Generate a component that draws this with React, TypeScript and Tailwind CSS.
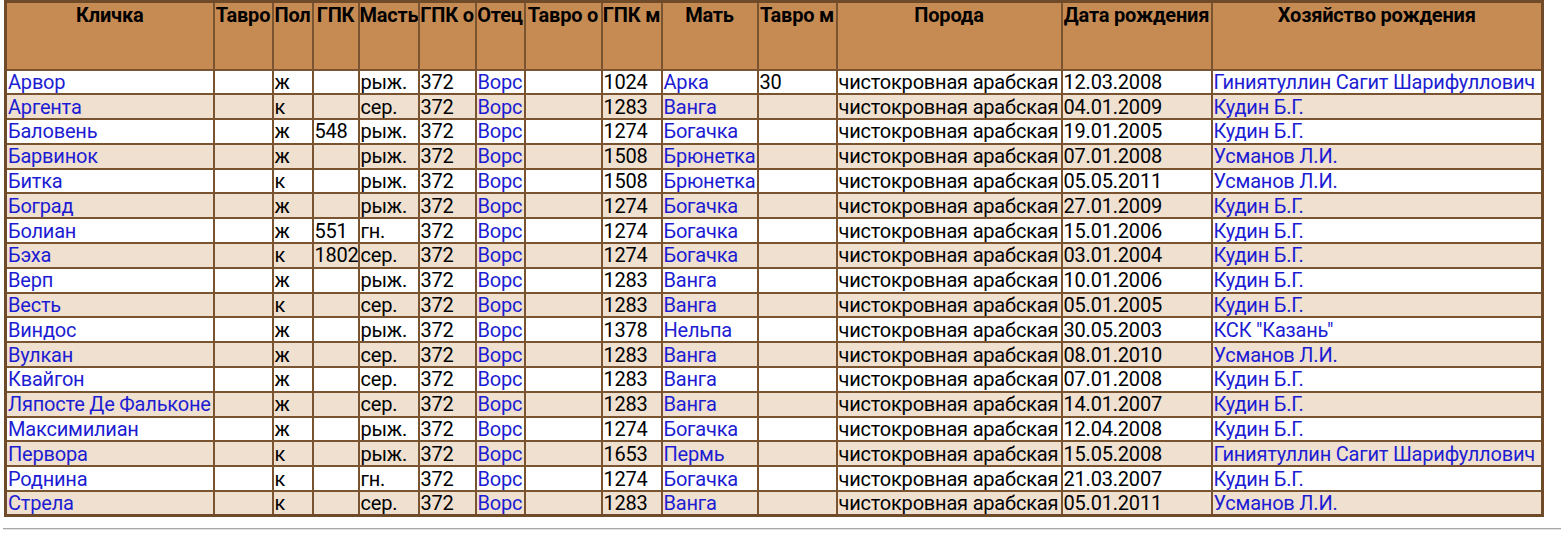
const columns = [
  { title: 'Кличка', w: 'w-[208px]' },
  { title: 'Тавро', w: 'w-[59px]' },
  { title: 'Пол', w: 'w-[40px]' },
  { title: 'ГПК', w: 'w-[46px]' },
  { title: 'Масть', w: 'w-[60px]' },
  { title: 'ГПК о', w: 'w-[57px]' },
  { title: 'Отец', w: 'w-[49px]' },
  { title: 'Тавро о', w: 'w-[77px]' },
  { title: 'ГПК м', w: 'w-[60px]' },
  { title: 'Мать', w: 'w-[96px]' },
  { title: 'Тавро м', w: 'w-[79px]' },
  { title: 'Порода', w: 'w-[225px]' },
  { title: 'Дата рождения', w: 'w-[150px]' },
  { title: 'Хозяйство рождения', w: 'w-[331px]' },
]

// columns rendered as links
const linkCols = [0, 6, 9, 13]

const BREED = 'чистокровная арабская'
const GINI = 'Гиниятуллин Сагит Шарифуллович'

const rows: string[][] = [
  ['Арвор', '', 'ж', '', 'рыж.', '372', 'Ворс', '', '1024', 'Арка', '30', BREED, '12.03.2008', GINI],
  ['Аргента', '', 'к', '', 'сер.', '372', 'Ворс', '', '1283', 'Ванга', '', BREED, '04.01.2009', 'Кудин Б.Г.'],
  ['Баловень', '', 'ж', '548', 'рыж.', '372', 'Ворс', '', '1274', 'Богачка', '', BREED, '19.01.2005', 'Кудин Б.Г.'],
  ['Барвинок', '', 'ж', '', 'рыж.', '372', 'Ворс', '', '1508', 'Брюнетка', '', BREED, '07.01.2008', 'Усманов Л.И.'],
  ['Битка', '', 'к', '', 'рыж.', '372', 'Ворс', '', '1508', 'Брюнетка', '', BREED, '05.05.2011', 'Усманов Л.И.'],
  ['Боград', '', 'ж', '', 'рыж.', '372', 'Ворс', '', '1274', 'Богачка', '', BREED, '27.01.2009', 'Кудин Б.Г.'],
  ['Болиан', '', 'ж', '551', 'гн.', '372', 'Ворс', '', '1274', 'Богачка', '', BREED, '15.01.2006', 'Кудин Б.Г.'],
  ['Бэха', '', 'к', '1802', 'сер.', '372', 'Ворс', '', '1274', 'Богачка', '', BREED, '03.01.2004', 'Кудин Б.Г.'],
  ['Верп', '', 'ж', '', 'рыж.', '372', 'Ворс', '', '1283', 'Ванга', '', BREED, '10.01.2006', 'Кудин Б.Г.'],
  ['Весть', '', 'к', '', 'сер.', '372', 'Ворс', '', '1283', 'Ванга', '', BREED, '05.01.2005', 'Кудин Б.Г.'],
  ['Виндос', '', 'ж', '', 'рыж.', '372', 'Ворс', '', '1378', 'Нельпа', '', BREED, '30.05.2003', 'КСК "Казань"'],
  ['Вулкан', '', 'ж', '', 'сер.', '372', 'Ворс', '', '1283', 'Ванга', '', BREED, '08.01.2010', 'Усманов Л.И.'],
  ['Квайгон', '', 'ж', '', 'сер.', '372', 'Ворс', '', '1283', 'Ванга', '', BREED, '07.01.2008', 'Кудин Б.Г.'],
  ['Ляпосте Де Фальконе', '', 'ж', '', 'сер.', '372', 'Ворс', '', '1283', 'Ванга', '', BREED, '14.01.2007', 'Кудин Б.Г.'],
  ['Максимилиан', '', 'ж', '', 'рыж.', '372', 'Ворс', '', '1274', 'Богачка', '', BREED, '12.04.2008', 'Кудин Б.Г.'],
  ['Первора', '', 'к', '', 'рыж.', '372', 'Ворс', '', '1653', 'Пермь', '', BREED, '15.05.2008', GINI],
  ['Роднина', '', 'к', '', 'гн.', '372', 'Ворс', '', '1274', 'Богачка', '', BREED, '21.03.2007', 'Кудин Б.Г.'],
  ['Стрела', '', 'к', '', 'сер.', '372', 'Ворс', '', '1283', 'Ванга', '', BREED, '05.01.2011', 'Усманов Л.И.'],
]

export default function App() {
  return (
    <div className="bg-white min-h-[534px] font-['Roboto',sans-serif] text-black overflow-hidden">
      <table className="ml-[4px] table-fixed border-collapse border-[3px] border-[#6f4b2a] w-[1540px]">
        <colgroup>
          {columns.map((c) => (
            <col key={c.title} className={c.w} />
          ))}
        </colgroup>
        <thead>
          <tr className="bg-[#c68b53] h-[68px]">
            {columns.map((c) => (
              <th
                key={c.title}
                className="border-2 border-[#7a5431] align-top text-center font-bold text-[20px] leading-[22px] px-0 pt-[1px] whitespace-nowrap overflow-hidden tracking-[-0.2px]"
              >
                {c.title}
              </th>
            ))}
          </tr>
        </thead>
        <tbody>
          {rows.map((r, i) => (
            <tr key={i} className={`h-[24.8px] ${i % 2 === 1 ? 'bg-[#f0e0d0]' : 'bg-white'}`}>
              {r.map((v, j) => (
                <td
                  key={j}
                  className="border-2 border-[#7a5431] px-px pt-[1px] pb-0 text-[20px] leading-[21px] tracking-[-0.2px] whitespace-nowrap overflow-hidden"
                >
                  {linkCols.includes(j) && v ? (
                    <a href="#" className="text-[#1c1cd2]">{v}</a>
                  ) : (
                    v
                  )}
                </td>
              ))}
            </tr>
          ))}
        </tbody>
      </table>
      <div className="mt-[11px] ml-[3px] h-[2px] border-t border-[#a8a8a8] border-b border-b-[#e2e2e2]" />
    </div>
  )
}
